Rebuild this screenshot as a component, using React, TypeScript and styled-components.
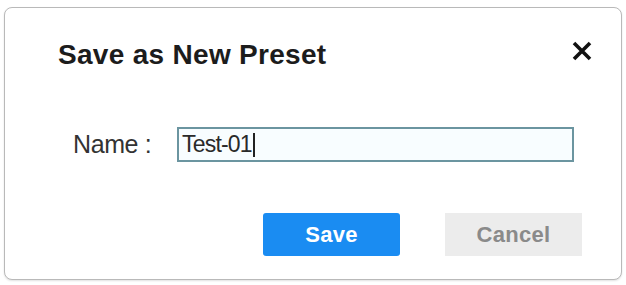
import React from "react";
import styled, { createGlobalStyle } from "styled-components";

const Global = createGlobalStyle`
  html, body { margin: 0; padding: 0; background: #ffffff; }
  body { font-family: "Liberation Sans", Arial, sans-serif; }
  * { box-sizing: border-box; }
`;

const Page = styled.div`
  width: 626px;
  height: 285px;
  padding: 7px 4px 5px 4px;
  background: #ffffff;
`;

const Dialog = styled.div`
  width: 618px;
  height: 273px;
  border: 1px solid #b9b9b9;
  border-radius: 8px;
  box-shadow: 0 1px 2px rgba(0, 0, 0, 0.12);
  background: #ffffff;
  display: flex;
  flex-direction: column;
  padding: 31px 28px 0 53px;
`;

const Header = styled.div`
  display: flex;
  align-items: center;
  justify-content: space-between;
  height: 32px;
`;

const Title = styled.h2`
  margin: 0;
  font-size: 28px;
  line-height: 32px;
  font-weight: 700;
  color: #1c1c1c;
  letter-spacing: 0.3px;
`;

const Close = styled.button`
  width: 22px;
  height: 22px;
  padding: 0;
  border: none;
  background: transparent;
  display: flex;
  align-items: center;
  justify-content: center;
  margin-top: -8px;
  cursor: pointer;
`;

const FormRow = styled.div`
  display: flex;
  align-items: center;
  margin-top: 56px;
  padding-left: 15px;
`;

const Label = styled.label`
  width: 104px;
  font-size: 25px;
  letter-spacing: -0.4px;
  color: #333333;
`;

const Field = styled.div`
  width: 397px;
  height: 35px;
  border: 2px solid #6b95a0;
  background: #f8fdff;
  display: flex;
  align-items: center;
  padding-left: 3px;
`;

const FieldText = styled.span`
  font-size: 23px;
  letter-spacing: -0.8px;
  color: #2a2a2a;
`;

const Caret = styled.span`
  display: inline-block;
  width: 2px;
  height: 24px;
  margin-left: 1px;
  background: #222222;
`;

const Actions = styled.div`
  display: flex;
  gap: 45px;
  margin-top: 51px;
  padding-left: 205px;
`;

const Button = styled.button<{ $primary?: boolean }>`
  width: 137px;
  height: 43px;
  border: none;
  border-radius: ${(p) => (p.$primary ? "3px" : "0")};
  background: ${(p) => (p.$primary ? "#1a8cf2" : "#ececec")};
  color: ${(p) => (p.$primary ? "#ffffff" : "#8a8a8a")};
  font-family: "Liberation Sans", Arial, sans-serif;
  font-size: 22px;
  font-weight: 700;
  letter-spacing: 0.3px;
  cursor: pointer;
`;

export default function App() {
  return (
    <>
      <Global />
      <Page>
        <Dialog>
          <Header>
            <Title>Save as New Preset</Title>
            <Close aria-label="Close">
              <svg width="20" height="20" viewBox="0 0 20 20">
                <path d="M2 2 L18 18 M18 2 L2 18" stroke="#111" strokeWidth="3.6" strokeLinecap="butt" />
              </svg>
            </Close>
          </Header>
          <FormRow>
            <Label>Name :</Label>
            <Field role="textbox">
              <FieldText>Test-01</FieldText>
              <Caret />
            </Field>
          </FormRow>
          <Actions>
            <Button $primary>Save</Button>
            <Button>Cancel</Button>
          </Actions>
        </Dialog>
      </Page>
    </>
  );
}
